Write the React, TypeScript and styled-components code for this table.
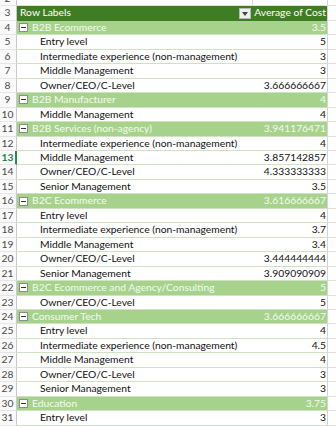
import React from "react";
import styled, { createGlobalStyle, css } from "styled-components";

const Global = createGlobalStyle`
  html, body { margin: 0; padding: 0; background: #ffffff; overflow: hidden; }
  body { font-family: Lato, "Open Sans", "Liberation Sans", sans-serif; }
`;

const ROW_H = 14.46;

type Kind = "blank" | "header" | "group" | "item";
interface RowData {
  n: number;
  kind: Kind;
  label?: string;
  value?: string;
}

const rows: RowData[] = [
  { n: 2, kind: "blank" },
  { n: 3, kind: "header", label: "Row Labels", value: "Average of Cost" },
  { n: 4, kind: "group", label: "B2B Ecommerce", value: "3.5" },
  { n: 5, kind: "item", label: "Entry level", value: "5" },
  { n: 6, kind: "item", label: "Intermediate experience (non-management)", value: "3" },
  { n: 7, kind: "item", label: "Middle Management", value: "3" },
  { n: 8, kind: "item", label: "Owner/CEO/C-Level", value: "3.666666667" },
  { n: 9, kind: "group", label: "B2B Manufacturer", value: "4" },
  { n: 10, kind: "item", label: "Middle Management", value: "4" },
  { n: 11, kind: "group", label: "B2B Services (non-agency)", value: "3.941176471" },
  { n: 12, kind: "item", label: "Intermediate experience (non-management)", value: "4" },
  { n: 13, kind: "item", label: "Middle Management", value: "3.857142857" },
  { n: 14, kind: "item", label: "Owner/CEO/C-Level", value: "4.333333333" },
  { n: 15, kind: "item", label: "Senior Management", value: "3.5" },
  { n: 16, kind: "group", label: "B2C Ecommerce", value: "3.616666667" },
  { n: 17, kind: "item", label: "Entry level", value: "4" },
  { n: 18, kind: "item", label: "Intermediate experience (non-management)", value: "3.7" },
  { n: 19, kind: "item", label: "Middle Management", value: "3.4" },
  { n: 20, kind: "item", label: "Owner/CEO/C-Level", value: "3.444444444" },
  { n: 21, kind: "item", label: "Senior Management", value: "3.909090909" },
  { n: 22, kind: "group", label: "B2C Ecommerce and Agency/Consulting", value: "5" },
  { n: 23, kind: "item", label: "Owner/CEO/C-Level", value: "5" },
  { n: 24, kind: "group", label: "Consumer Tech", value: "3.666666667" },
  { n: 25, kind: "item", label: "Entry level", value: "4" },
  { n: 26, kind: "item", label: "Intermediate experience (non-management)", value: "4.5" },
  { n: 27, kind: "item", label: "Middle Management", value: "4" },
  { n: 28, kind: "item", label: "Owner/CEO/C-Level", value: "3" },
  { n: 29, kind: "item", label: "Senior Management", value: "3" },
  { n: 30, kind: "group", label: "Education", value: "3.75" },
  { n: 31, kind: "item", label: "Entry level", value: "3" },
];

const ACTIVE_ROW = 13;

const Sheet = styled.div`
  margin-top: -8px;
  width: 336px;
  font-size: 10.3px;
`;

const Row = styled.div`
  display: grid;
  grid-template-columns: 17px 236px 74px 1fr;
  height: ${ROW_H}px;
  line-height: ${ROW_H - 1}px;
`;

const RowNum = styled.div<{ $active?: boolean }>`
  box-sizing: border-box;
  border-right: ${(p) => (p.$active ? "2px solid #2e8b46" : "1px solid #c9c9c9")};
  border-bottom: 1px solid #e6e6e6;
  background: #fafafa;
  color: ${(p) => (p.$active ? "#23864a" : "#4a4a4a")};
  font-weight: ${(p) => (p.$active ? 700 : 400)};
  text-align: center;
  font-size: 10.3px;
  padding-right: ${(p) => (p.$active ? "0px" : "1px")};
`;

const bandColors: Record<Kind, string> = {
  blank: "#ffffff",
  header: "#3f7d24",
  group: "#a6d28c",
  item: "#ffffff",
};

const Cell = styled.div<{ $kind: Kind; $align?: "left" | "right"; $divider?: boolean }>`
  box-sizing: border-box;
  position: relative;
  background: ${(p) => bandColors[p.$kind]};
  white-space: nowrap;
  text-align: ${(p) => p.$align ?? "left"};
  border-bottom: 1px solid
    ${(p) => (p.$kind === "blank" ? "#e1e1e1" : p.$kind === "header" ? "#3f7d24" : "#cfe3c3")};
  ${(p) =>
    p.$divider &&
    css`
      border-right: 1px solid #d9d9d9;
    `}
  ${(p) =>
    p.$kind === "header" &&
    css`
      color: #ffffff;
    `}
  ${(p) =>
    p.$kind === "group" &&
    css`
      color: #f4fbef;
    `}
  ${(p) =>
    p.$kind === "item" &&
    css`
      color: #111111;
    `}
`;

const LabelCell = styled(Cell)`
  display: flex;
  align-items: center;
  overflow: visible;
  z-index: 1;
`;

const ValueCell = styled(Cell)`
  padding-right: 1px;
`;

const Spare = styled.div`
  box-sizing: border-box;
  border-left: 1px solid #d4d4d4;
  border-bottom: 1px solid #e1e1e1;
  background: #ffffff;
`;

const Text = styled.span<{ $indent: number }>`
  padding-left: ${(p) => p.$indent}px;
  white-space: nowrap;
`;

const Toggle = styled.span`
  box-sizing: border-box;
  width: 9px;
  height: 9px;
  margin-left: 2px;
  background: #ffffff;
  border: 1px solid #8c8c8c;
  display: inline-flex;
  align-items: center;
  justify-content: center;
  flex: none;
  &::before {
    content: "";
    width: 5px;
    height: 1px;
    background: #333333;
  }
`;

const FilterButton = styled.span`
  position: absolute;
  right: 2px;
  top: 2px;
  box-sizing: border-box;
  width: 12px;
  height: 11px;
  background: #f0f0f0;
  border: 1px solid #b9b9b9;
  display: flex;
  align-items: center;
  justify-content: center;
`;

const Triangle = styled.span`
  width: 0;
  height: 0;
  border-left: 3.5px solid transparent;
  border-right: 3.5px solid transparent;
  border-top: 4px solid #444444;
`;

function SheetRow({ r }: { r: RowData }) {
  const active = r.n === ACTIVE_ROW;
  if (r.kind === "blank") {
    return (
      <Row>
        <RowNum>{r.n}</RowNum>
        <Cell $kind="blank" $divider />
        <Cell $kind="blank" />
        <Spare />
      </Row>
    );
  }
  if (r.kind === "header") {
    return (
      <Row>
        <RowNum>{r.n}</RowNum>
        <LabelCell $kind="header">
          <Text $indent={3}>{r.label}</Text>
          <FilterButton>
            <Triangle />
          </FilterButton>
        </LabelCell>
        <ValueCell $kind="header" $align="right">
          {r.value}
        </ValueCell>
        <Spare />
      </Row>
    );
  }
  if (r.kind === "group") {
    return (
      <Row>
        <RowNum>{r.n}</RowNum>
        <LabelCell $kind="group">
          <Toggle />
          <Text $indent={4}>{r.label}</Text>
        </LabelCell>
        <ValueCell $kind="group" $align="right">
          {r.value}
        </ValueCell>
        <Spare />
      </Row>
    );
  }
  return (
    <Row>
      <RowNum $active={active}>{r.n}</RowNum>
      <LabelCell $kind="item">
        <Text $indent={23}>{r.label}</Text>
      </LabelCell>
      <ValueCell $kind="item" $align="right">
        {r.value}
      </ValueCell>
      <Spare />
    </Row>
  );
}

export default function App() {
  return (
    <>
      <Global />
      <Sheet>
        {rows.map((r) => (
          <SheetRow key={r.n} r={r} />
        ))}
      </Sheet>
    </>
  );
}
